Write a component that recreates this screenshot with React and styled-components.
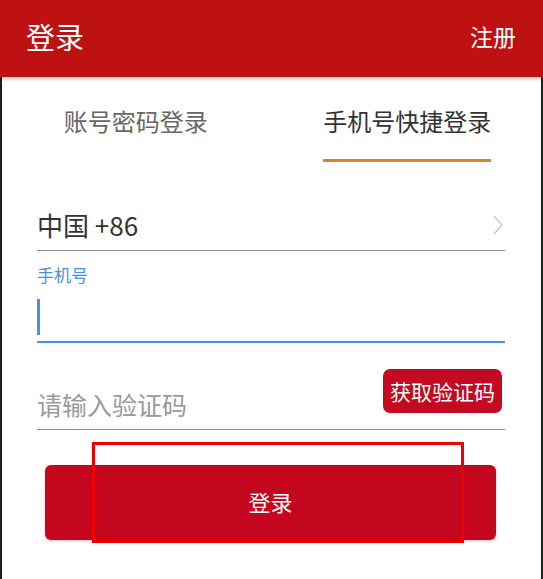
import React from "react";
import styled, { createGlobalStyle } from "styled-components";

const GlobalStyle = createGlobalStyle`
  html, body {
    margin: 0;
    padding: 0;
    background: #fff;
  }
  body {
    font-family: "Noto Sans CJK SC", "Noto Sans", sans-serif;
  }
`;

const App = () => {
  return (
    <>
      <GlobalStyle />
      <Page>
        <Header>
          <Title>登录</Title>
          <HeaderLink>注册</HeaderLink>
        </Header>
        <Body>
          <Tabs>
            <Tab>
              <TabLabel>账号密码登录</TabLabel>
            </Tab>
            <Tab>
              <TabLabel $active>手机号快捷登录</TabLabel>
            </Tab>
          </Tabs>
          <Form>
            <CountryRow>
              <CountryText>中国 +86</CountryText>
              <svg width="10" height="20" viewBox="0 0 10 20">
                <path d="M1 1 L9 10 L1 19" fill="none" stroke="#c4c4c4" strokeWidth="1.3" />
              </svg>
            </CountryRow>
            <FieldLabel>手机号</FieldLabel>
            <PhoneField>
              <Cursor />
            </PhoneField>
            <CodeRow>
              <Placeholder>请输入验证码</Placeholder>
              <CodeButton>获取验证码</CodeButton>
            </CodeRow>
            <LoginButton>登录</LoginButton>
          </Form>
          <Highlight />
        </Body>
      </Page>
    </>
  );
};

export default App;

const Page = styled.div`
  width: 543px;
  height: 579px;
  overflow: hidden;
  display: flex;
  flex-direction: column;
`;

const Header = styled.div`
  height: 77px;
  flex-shrink: 0;
  box-sizing: border-box;
  padding: 0 26px 5px 26px;
  background: #be1111;
  display: flex;
  align-items: center;
  justify-content: space-between;
  color: #fff;
  box-shadow: 0 2px 4px rgba(0, 0, 0, 0.22);
  position: relative;
  z-index: 1;
`;

const Title = styled.div`
  font-size: 29px;
  line-height: 1;
`;

const HeaderLink = styled.div`
  font-size: 23px;
  line-height: 1;
  margin-right: 1px;
`;

const Body = styled.div`
  flex: 1;
  position: relative;
  box-shadow: inset 2px 0 0 #1e1e1e, inset -2px 0 0 #1e1e1e;
`;

const Tabs = styled.div`
  display: flex;
  padding-top: 27px;
`;

const Tab = styled.div`
  flex: 1;
  display: flex;
  justify-content: center;
`;

const TabLabel = styled.div`
  font-size: 24px;
  line-height: 34px;
  padding-bottom: 21px;
  color: ${(p) => (p.$active ? "#333" : "#666")};
  border-bottom: 3px solid ${(p) => (p.$active ? "#d3872c" : "transparent")};
`;

const Form = styled.div`
  display: flex;
  flex-direction: column;
  padding: 0 38px 0 37px;
`;

const CountryRow = styled.div`
  margin-top: 45px;
  padding-bottom: 7px;
  border-bottom: 1px solid #8a8a8a;
  display: flex;
  align-items: center;
  justify-content: space-between;
  padding-right: 2px;
`;

const CountryText = styled.div`
  font-size: 26px;
  line-height: 36px;
  color: #333;
`;

const FieldLabel = styled.div`
  margin-top: 12px;
  font-size: 17px;
  line-height: 24px;
  color: #4a90e2;
`;

const PhoneField = styled.div`
  margin-top: 8px;
  padding: 4px 0 6px;
  border-bottom: 2px solid #4a90e2;
`;

const Cursor = styled.div`
  width: 3px;
  height: 36px;
  background: #4a90e2;
`;

const CodeRow = styled.div`
  margin-top: 26px;
  height: 60px;
  border-bottom: 1px solid #8a8a8a;
  display: flex;
  justify-content: space-between;
`;

const Placeholder = styled.div`
  align-self: flex-end;
  margin-bottom: 7px;
  font-size: 25px;
  line-height: 36px;
  color: #9a9a9a;
`;

const CodeButton = styled.button`
  align-self: flex-start;
  margin-right: 3px;
  width: 119px;
  height: 44px;
  border: none;
  border-radius: 7px;
  background: #c40a20;
  color: #fff;
  font-family: "Noto Sans CJK SC", "Noto Sans", sans-serif;
  font-size: 21px;
  padding: 0;
`;

const LoginButton = styled.button`
  margin: 35px 9px 0 8px;
  height: 75px;
  border: none;
  border-radius: 6px;
  background: #c4061e;
  color: #fff;
  font-family: "Noto Sans CJK SC", "Noto Sans", sans-serif;
  font-size: 22px;
  padding: 0 0 4px;
  box-shadow: 0 1px 3px rgba(196, 6, 30, 0.25);
`;

const Highlight = styled.div`
  position: absolute;
  left: 92px;
  top: 365px;
  width: 372px;
  height: 101px;
  box-sizing: border-box;
  border: 3px solid #ee0000;
  pointer-events: none;
`;
